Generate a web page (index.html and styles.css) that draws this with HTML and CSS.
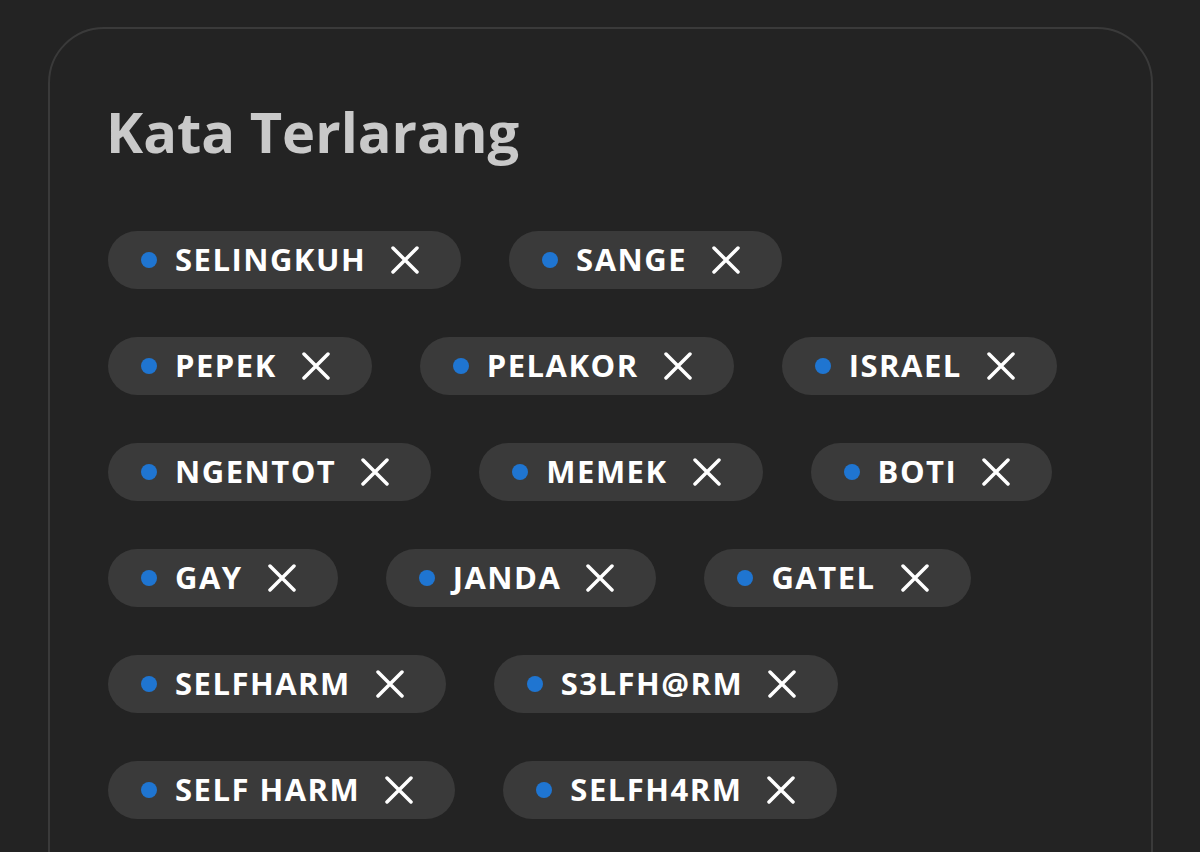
FILE: index.html
```html
<!DOCTYPE html>
<html lang="id">

<head>
  <meta charset="UTF-8">
  <meta name="viewport" content="width=device-width, initial-scale=1.0">
  <title>Kata Terlarang</title>
  <link rel="stylesheet" href="styles.css">
</head>

<body>
  <div class="panel">
    <h1>Kata Terlarang</h1>

    <div id="wordList" class="word-list">
      <!-- words are rendered here -->
    </div>
  </div>

  <script>
    const words = [
      "SELINGKUH", "SANGE", "PEPEK", "PELAKOR", "ISRAEL",
      "NGENTOT", "MEMEK", "BOTI", "GAY", "JANDA", "GATEL",
      "SELFHARM", "S3LFH@RM", "SELF HARM", "SELFH4RM"
    ];

    const wordList = document.getElementById("wordList");

    function renderWords() {
      wordList.innerHTML = "";

      words.forEach((word) => {
        const chip = document.createElement("div");
        chip.className = "word-chip";
        chip.innerHTML = `
          <span class="dot"></span>
          <span class="word">${ word }</span>
          <button class="remove" aria-label="Hapus">
            <svg width="28" height="28" viewBox="0 0 28 28">
              <path d="M2 2 L26 26 M26 2 L2 26" />
            </svg>
          </button>
        `;
        wordList.appendChild(chip);
      });
    }

    renderWords();
  </script>
</body>

</html>
```

FILE: styles.css
```css
body {
  margin: 0;
  padding: 27px 47px 0 48px;
  background-color: #232323;
  font-family: "Open Sans", "Noto Sans", sans-serif;
  height: 852px;
  box-sizing: border-box;
  overflow: hidden;
}

.panel {
  border: 2px solid #3a3a3a;
  border-radius: 56px;
  padding: 66px 76px 120px 58px;
  min-height: 900px;
}

h1 {
  margin: 0 0 64px -2px;
  font-size: 56px;
  font-weight: 700;
  line-height: 72px;
  color: #c9c9c9;
}

.word-list {
  display: flex;
  flex-wrap: wrap;
  column-gap: 48px;
  row-gap: 48px;
}

.word-chip {
  display: inline-flex;
  align-items: center;
  height: 58px;
  padding: 0 42px 0 33px;
  background-color: #3a3a3a;
  border-radius: 29px;
  box-sizing: border-box;
}

.dot {
  width: 16px;
  height: 16px;
  border-radius: 50%;
  background-color: #1f75d1;
  margin-right: 18px;
}

.word {
  color: #ffffff;
  font-size: 31px;
  font-weight: 700;
  letter-spacing: 1.5px;
  margin-top: -3px;
}

.remove {
  margin-left: 25px;
  padding: 0;
  background: none;
  border: none;
  display: flex;
  cursor: pointer;
}

.remove svg path {
  stroke: #ffffff;
  stroke-width: 3.5;
  stroke-linecap: round;
  fill: none;
}
```
